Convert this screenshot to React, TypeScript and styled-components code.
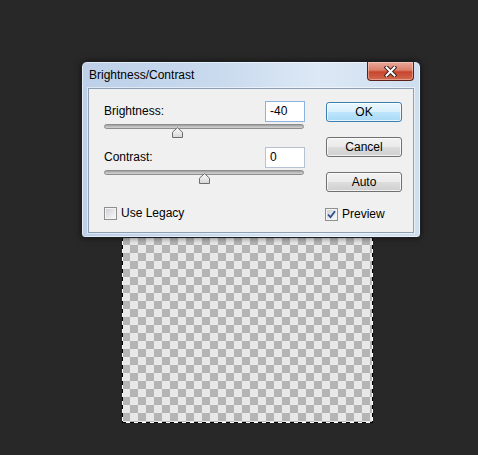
import React from "react";
import styled, { createGlobalStyle } from "styled-components";

const Global = createGlobalStyle`
  html, body { margin: 0; padding: 0; background: #282828; }
  body { font-family: "Liberation Sans", Arial, sans-serif; }
  * { box-sizing: border-box; }
`;

const Stage = styled.div`
  position: relative;
  width: 478px;
  height: 455px;
  overflow: hidden;
  background: #282828;
  padding: 173px 0 0 122px;
`;

const ants = (dir: string) =>
  `repeating-linear-gradient(${dir}, #000 0 4px, #fff 4px 8px)`;

const Canvas = styled.div`
  width: 251px;
  height: 250px;
  background:
    ${ants("90deg")} top left / 100% 1px no-repeat,
    ${ants("90deg")} bottom left / 100% 1px no-repeat,
    ${ants("180deg")} top left / 1px 100% no-repeat,
    ${ants("180deg")} top right / 1px 100% no-repeat,
    conic-gradient(#e8e8e8 25%, #b5b5b5 0 50%, #e8e8e8 0 75%, #b5b5b5 0) 0 0 / 16px 16px;
`;

const Dialog = styled.div`
  position: absolute;
  left: 81px;
  top: 61px;
  width: 340px;
  height: 177px;
  border: 1px solid #1b1f24;
  border-radius: 6px 6px 4px 4px;
  background: linear-gradient(90deg, #bcd0e8 0%, #c9daee 40%, #dce8f5 70%, #cfdeef 100%);
  box-shadow: 0 0 6px rgba(0, 0, 0, 0.55), inset 0 0 0 1px rgba(255, 255, 255, 0.55);
  display: flex;
  flex-direction: column;
`;

const TitleBar = styled.div`
  height: 26px;
  padding: 0 6px 0 7px;
  display: flex;
  justify-content: space-between;
  align-items: flex-start;
`;

const Title = styled.div`
  font-size: 12px;
  line-height: 26px;
  color: #000;
`;

const CloseButton = styled.div`
  width: 47px;
  height: 19px;
  border: 1px solid #5a2118;
  border-top: none;
  border-radius: 0 0 4px 4px;
  background: linear-gradient(180deg, #e9a99b 0%, #dc7f6a 45%, #c8452c 55%, #d06a4f 100%);
  box-shadow: inset 0 0 0 1px rgba(255, 220, 210, 0.45);
  display: flex;
  align-items: center;
  justify-content: center;
`;

const Body = styled.div`
  flex: 1;
  padding: 0 6px 4px 6px;
  display: flex;
`;

const Panel = styled.div`
  flex: 1;
  background: #f0f0f0;
  border: 1px solid #8e9fb3;
  box-shadow: 0 0 0 1px rgba(255, 255, 255, 0.5);
  padding: 12px 0 0 15px;
  display: flex;
  align-items: flex-start;
`;

const LeftCol = styled.div`
  width: 201px;
  display: flex;
  flex-direction: column;
`;

const FieldRow = styled.div<{ $gap?: number }>`
  height: 21px;
  margin-top: ${(p) => p.$gap ?? 0}px;
  display: flex;
  align-items: center;
  justify-content: space-between;
`;

const Label = styled.span`
  font-size: 12px;
  line-height: 15px;
  color: #000;
`;

const NumberBox = styled.div<{ $focus?: boolean }>`
  width: 40px;
  height: 21px;
  background: #fff;
  border: 1px solid ${(p) => (p.$focus ? "#8bb3de" : "#b4c2d2")};
  font-size: 12px;
  line-height: 19px;
  padding-left: 4px;
  color: #000;
`;

const Slider = styled.div`
  position: relative;
  width: 200px;
  height: 14px;
  margin-top: 2px;
`;

const Track = styled.div`
  height: 5px;
  border-radius: 3px;
  border: 1px solid #8d8d8d;
  background: linear-gradient(180deg, #9c9c9c 0%, #bdbdbd 50%, #d2d2d2 100%);
`;

const Thumb = styled.svg`
  position: absolute;
  top: 3px;
  width: 11px;
  height: 11px;
  margin-left: -5px;
`;

const CheckRow = styled.div<{ $gap?: number; $shift?: number }>`
  margin-top: ${(p) => p.$gap ?? 0}px;
  margin-left: ${(p) => p.$shift ?? 0}px;
  display: flex;
  align-items: center;
  gap: 4px;
  font-size: 12px;
  line-height: 15px;
  color: #000;
`;

const Box = styled.div`
  width: 13px;
  height: 13px;
  border: 1px solid #8f8f8f;
  background: #f4f4f4;
  padding: 1px;
  display: flex;
`;

const BoxInner = styled.div`
  flex: 1;
  background: linear-gradient(135deg, #cfd2d6 0%, #e6e7e9 55%, #f7f7f7 100%);
  display: flex;
  align-items: center;
  justify-content: center;
`;

const RightCol = styled.div`
  width: 76px;
  margin-left: 21px;
  padding-top: 1px;
  display: flex;
  flex-direction: column;
  gap: 15px;
`;

const Button = styled.div<{ $default?: boolean }>`
  height: 20px;
  border: 1px solid ${(p) => (p.$default ? "#3c7fb1" : "#707070")};
  border-radius: 3px;
  background: ${(p) =>
    p.$default
      ? "linear-gradient(180deg, #eaf6fd 0%, #d9f0fc 50%, #bee6fd 50%, #a7d9f5 100%)"
      : "linear-gradient(180deg, #f2f2f2 0%, #ebebeb 50%, #dddddd 50%, #cfcfcf 100%)"};
  box-shadow: inset 0 0 0 1px rgba(255, 255, 255, 0.7);
  font-size: 12px;
  line-height: 18px;
  text-align: center;
  color: #000;
`;

const BRIGHT = { min: -150, max: 150 };
const CONTRAST = { min: -50, max: 50 };

const pos = (v: number, r: { min: number; max: number }) =>
  `${((v - r.min) / (r.max - r.min)) * 100}%`;

const ThumbIcon = ({ left }: { left: string }) => (
  <Thumb viewBox="0 0 11 11" style={{ left }}>
    <defs>
      <linearGradient id="tg" x1="0" y1="0" x2="0" y2="1">
        <stop offset="0" stopColor="#fbfbfb" />
        <stop offset="1" stopColor="#d6d6d6" />
      </linearGradient>
    </defs>
    <path d="M5.5 0.6 L10.5 5.2 L10.5 10.5 L0.5 10.5 L0.5 5.2 Z" fill="url(#tg)" stroke="#6e6e6e" strokeWidth="1" strokeLinejoin="round" />
  </Thumb>
);

const CheckBox = ({ checked }: { checked?: boolean }) => (
  <Box>
    <BoxInner>
      {checked && (
        <svg width="9" height="9" viewBox="0 0 9 9">
          <path d="M1 4.5 L3.5 7.2 L8 1.2" fill="none" stroke="#2b4c8c" strokeWidth="1.8" />
        </svg>
      )}
    </BoxInner>
  </Box>
);

export default function App() {
  const brightness = -40;
  const contrast = 0;
  return (
    <>
      <Global />
      <Stage>
        <Canvas />
        <Dialog>
          <TitleBar>
            <Title>Brightness/Contrast</Title>
            <CloseButton>
              <svg width="13" height="11" viewBox="0 0 13 11">
                <path d="M2.5 1.5 L10.5 9.5 M10.5 1.5 L2.5 9.5" stroke="#3a2320" strokeWidth="4" strokeLinecap="square" />
                <path d="M2.5 1.5 L10.5 9.5 M10.5 1.5 L2.5 9.5" stroke="#fff" strokeWidth="2" strokeLinecap="square" />
              </svg>
            </CloseButton>
          </TitleBar>
          <Body>
            <Panel>
              <LeftCol>
                <FieldRow>
                  <Label>Brightness:</Label>
                  <NumberBox $focus>{brightness}</NumberBox>
                </FieldRow>
                <Slider>
                  <Track />
                  <ThumbIcon left={pos(brightness, BRIGHT)} />
                </Slider>
                <FieldRow $gap={9}>
                  <Label>Contrast:</Label>
                  <NumberBox>{contrast}</NumberBox>
                </FieldRow>
                <Slider>
                  <Track />
                  <ThumbIcon left={pos(contrast, CONTRAST)} />
                </Slider>
                <CheckRow $gap={22}>
                  <CheckBox />
                  <span>Use Legacy</span>
                </CheckRow>
              </LeftCol>
              <RightCol>
                <Button $default>OK</Button>
                <Button>Cancel</Button>
                <Button>Auto</Button>
                <CheckRow $shift={-1}>
                  <CheckBox checked />
                  <span>Preview</span>
                </CheckRow>
              </RightCol>
            </Panel>
          </Body>
        </Dialog>
      </Stage>
    </>
  );
}
